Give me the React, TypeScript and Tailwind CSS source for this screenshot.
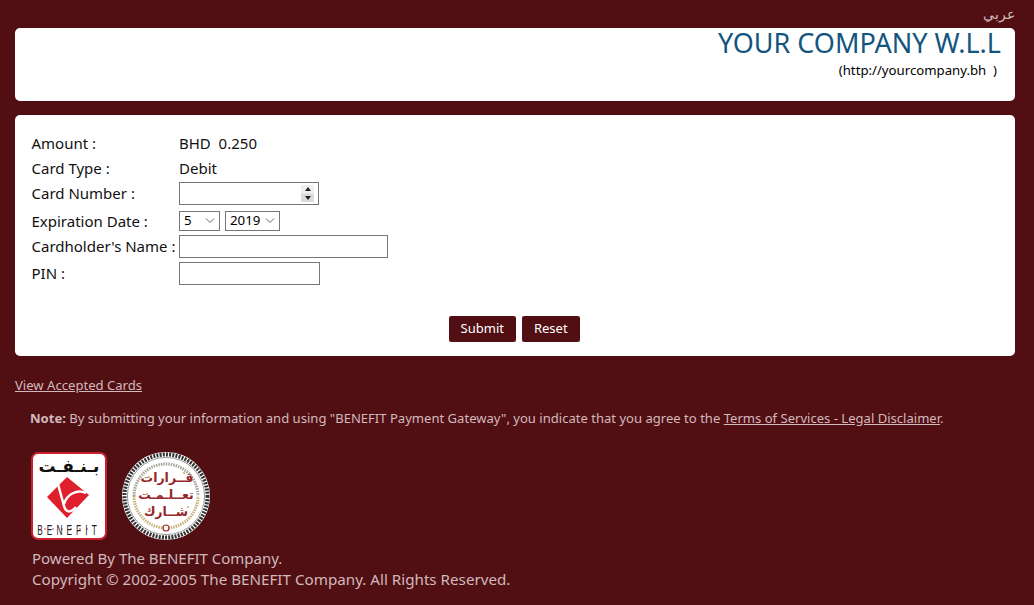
import React from 'react';

function BenefitLogo() {
  return (
    <svg width="76" height="88" viewBox="0 0 76 88">
      <rect x="1" y="1" width="74" height="86" rx="6" fill="#fff" stroke="#c8202f" strokeWidth="2" />
      <text x="38" y="20" textAnchor="middle" fontSize="17" fontWeight="700" fontFamily="'Noto Sans', 'DejaVu Sans', sans-serif" fill="#111">بـنـفـت</text>
      <path d="M36 25 L58 43 L36 66 L16 45 Z" fill="#e01f2d" />
      <path d="M27 32 L33 54 C35 61 40 61 45 55" fill="none" stroke="#fff" strokeWidth="2.5" />
      <path d="M33 52 C36 42 46 37 55 41" fill="none" stroke="#fff" strokeWidth="2.5" />
      <g fill="#c8202f">
        <circle cx="14" cy="77" r="0.8" />
        <circle cx="22" cy="77" r="0.8" />
        <circle cx="31" cy="77" r="0.8" />
        <circle cx="40" cy="77" r="0.8" />
        <circle cx="49" cy="77" r="0.8" />
        <circle cx="56" cy="77" r="0.8" />
      </g>
      <text transform="translate(38 83) scale(0.55 1)" textAnchor="middle" fontSize="15" letterSpacing="7.5" fontFamily="'Liberation Sans', sans-serif" fill="#222">BENEFIT</text>
    </svg>
  );
}

function SealLogo() {
  return (
    <svg width="88" height="88" viewBox="0 0 88 88">
      <circle cx="44" cy="44" r="44" fill="#fff" />
      <circle cx="44" cy="44" r="41.5" fill="none" stroke="#333" strokeWidth="4" strokeDasharray="2 1.2" />
      <circle cx="44" cy="44" r="38.6" fill="none" stroke="#999" strokeWidth="1" />
      <path d="M12 44 A32 32 0 0 1 76 44" fill="none" stroke="#a9a49a" strokeWidth="3" strokeDasharray="1.5 1" />
      <path d="M12 44 A32 32 0 0 0 76 44" fill="none" stroke="#c9b27a" strokeWidth="3" strokeDasharray="1.5 1" />
      <circle cx="44" cy="76" r="3" fill="#fff" stroke="#a22" strokeWidth="1.2" />
      <g fill="#c9a85a">
        <circle cx="27" cy="25" r="1" />
        <circle cx="62" cy="21" r="1" />
        <circle cx="25" cy="42" r="1" />
        <circle cx="66" cy="55" r="1" />
        <circle cx="32" cy="60" r="1" />
      </g>
      <text x="45" y="30" textAnchor="middle" fontSize="12.5" fontFamily="'Noto Sans', 'DejaVu Sans', sans-serif" fontWeight="700" fill="#95262a">قــرارات</text>
      <text x="44" y="47" textAnchor="middle" fontSize="12.5" fontFamily="'Noto Sans', 'DejaVu Sans', sans-serif" fontWeight="700" fill="#95262a">تعــلـمـت</text>
      <text x="44" y="64" textAnchor="middle" fontSize="12.5" fontFamily="'Noto Sans', 'DejaVu Sans', sans-serif" fontWeight="700" fill="#95262a">شــارك</text>
    </svg>
  );
}

function Row({ label, className, children }: { label: string; className: string; children: React.ReactNode }) {
  return (
    <div className={`flex items-center ${className}`}>
      <div className="w-[147.5px] shrink-0 whitespace-nowrap">{label}</div>
      {children}
    </div>
  );
}

function Select({ value, className }: { value: string; className: string }) {
  return (
    <div className={`flex h-[20px] items-center justify-between border border-[#767676] pr-[4px] pl-1 text-[13.3px] leading-none text-black ${className}`}>
      <span>{value}</span>
      <svg width="10" height="6" viewBox="0 0 10 6" fill="none" stroke="#666" strokeWidth="1">
        <path d="M1 0.5 L5 4.5 L9 0.5" />
      </svg>
    </div>
  );
}

export default function App() {
  return (
    <div className="min-h-[605px] bg-[#510f14] pt-[5px] pr-[19px] pl-[15px] font-['Noto_Sans',sans-serif] text-[15.2px] text-[#d2b9bb]">
      <div className="h-[23px] text-right text-[14px] leading-[18px]">عربي</div>

      <div className="h-[73px] rounded-[5px] bg-white pr-[14px] text-right">
        <div className="text-[27px] leading-[30px] text-[#14557f]">YOUR COMPANY W.L.L</div>
        <div className="mt-[3px] pr-[4px] text-[13.2px] leading-[18px] whitespace-pre text-black">(http://yourcompany.bh  )</div>
      </div>

      <div className="mt-[14px] h-[241px] rounded-[5px] bg-white pt-[16px] pl-[16.5px] text-[15px] text-[#111]">
        <Row label="Amount :" className="h-[25px]"><span className="whitespace-pre">BHD  0.250</span></Row>
        <Row label="Card Type :" className="h-[25px]"><span>Debit</span></Row>
        <Row label="Card Number :" className="h-[25px]">
          <div className="flex h-[23px] w-[140px] items-center justify-end border border-[#767676] pr-[4px]">
            <div className="flex h-[17px] w-[13px] flex-col gap-px bg-[#e6e6e6]">
              <div className="flex flex-1 items-center justify-center bg-[#f0f0f0]">
                <svg width="6" height="4" viewBox="0 0 6 4"><path d="M3 0 L6 4 H0 Z" fill="#222" /></svg>
              </div>
              <div className="flex flex-1 items-center justify-center bg-[#dcdcdc]">
                <svg width="6" height="4" viewBox="0 0 6 4"><path d="M0 0 H6 L3 4 Z" fill="#222" /></svg>
              </div>
            </div>
          </div>
        </Row>
        <Row label="Expiration Date :" className="mt-px h-[28px]">
          <Select value="5" className="w-[41px]" />
          <Select value="2019" className="ml-[5px] w-[55px]" />
        </Row>
        <Row label="Cardholder's Name :" className="h-[23px]">
          <div className="h-[23px] w-[209px] border border-[#767676]" />
        </Row>
        <Row label="PIN :" className="mt-[4px] h-[23px]">
          <div className="h-[23px] w-[141px] border border-[#767676]" />
        </Row>
        <div className="mt-[31px] flex justify-center gap-[6px] pr-[18px] text-[13px] text-white">
          <button className="h-[26px] w-[67px] rounded-[1px] bg-[#b59c9e]">
            <span className="flex h-full items-center justify-center rounded-[3px] bg-[#510f14]">Submit</span>
          </button>
          <button className="h-[26px] w-[58px] rounded-[1px] bg-[#b59c9e]">
            <span className="flex h-full items-center justify-center rounded-[3px] bg-[#510f14]">Reset</span>
          </button>
        </div>
      </div>

      <div className="mt-[20px] text-[13.1px] leading-[18px]">
        <a className="underline">View Accepted Cards</a>
      </div>
      <div className="mt-[15px] pl-[15px] text-[13.07px] leading-[18px]">
        <b>Note:</b> By submitting your information and using "BENEFIT Payment Gateway", you indicate that you agree to the{' '}
        <a className="underline">Terms of Services - Legal Disclaimer</a>.
      </div>

      <div className="mt-[25px] flex items-center gap-[15px] pl-[16px]">
        <BenefitLogo />
        <SealLogo />
      </div>
      <div className="mt-[8px] pl-[17px] leading-[21px]">
        <div className="text-[15px]">Powered By The BENEFIT Company.</div>
        <div>Copyright © 2002-2005 The BENEFIT Company. All Rights Reserved.</div>
      </div>
    </div>
  );
}
